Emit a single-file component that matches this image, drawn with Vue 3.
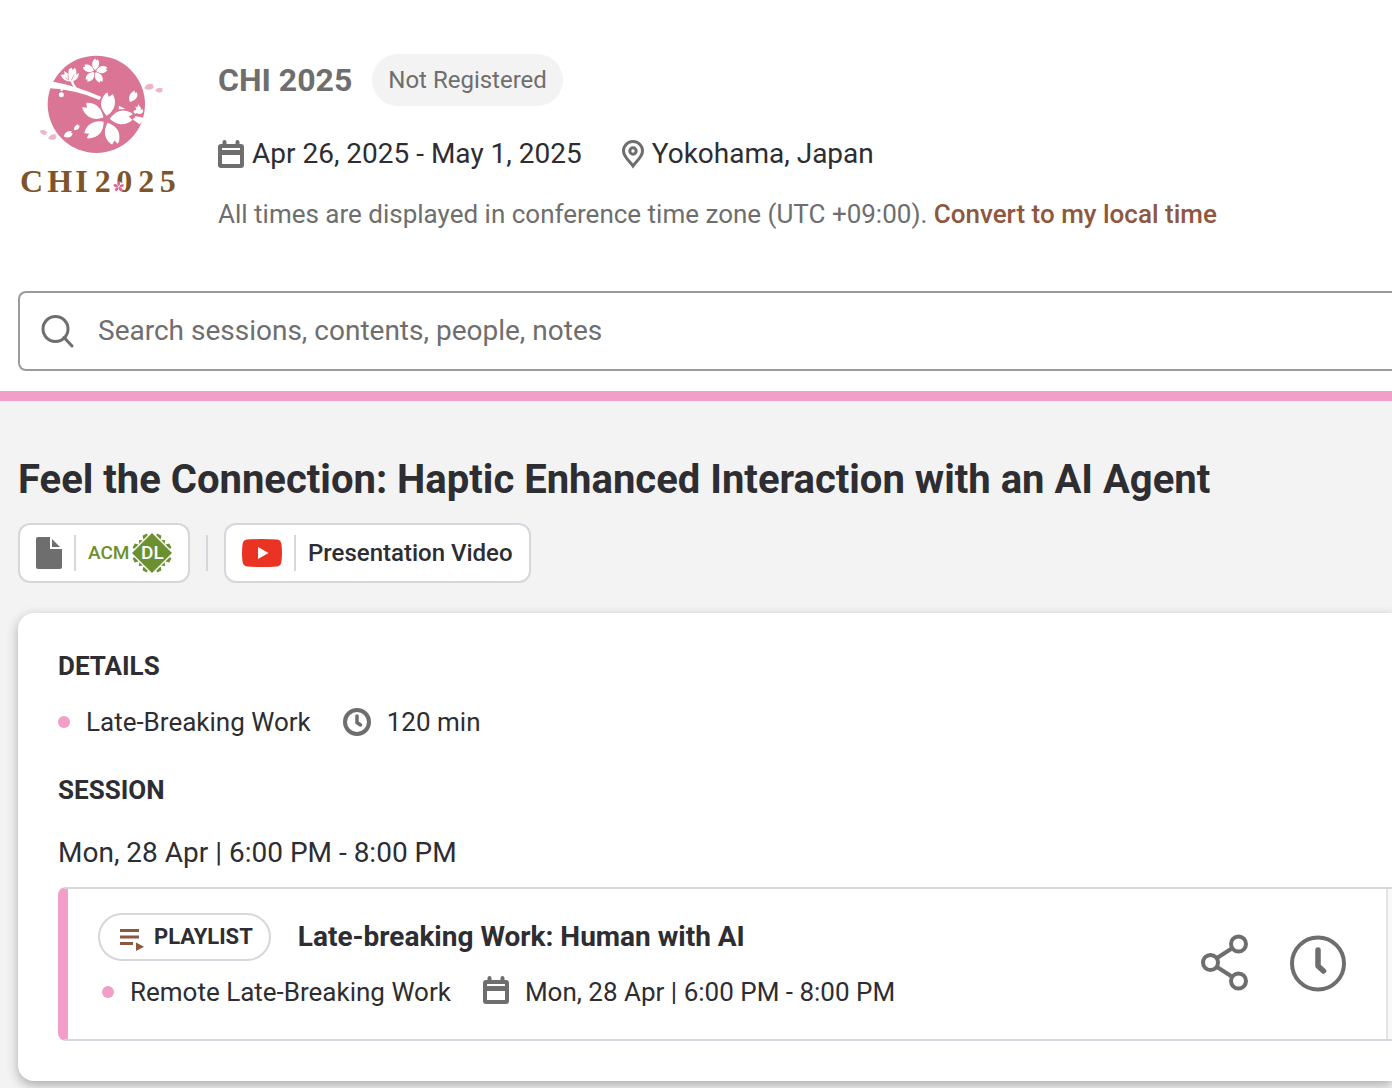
<script setup>
import { ref } from 'vue'

const query = ref('')

const petals = [0, 72, 144, 216, 288]
const openPetals = [5, 82, 158, 229, 300]
const sides = [45, 135, 225, 315]
</script>

<template>
  <div class="page">
    <svg class="defs" aria-hidden="true">
      <symbol id="icon-calendar" viewBox="0 0 26 28">
        <path fill-rule="evenodd" d="M4.500 4V2a2 2 0 0 1 4 0v2h9V2a2 2 0 0 1 4 0v2H23a3 3 0 0 1 3 3v18a3 3 0 0 1-3 3H3a3 3 0 0 1-3-3V7a3 3 0 0 1 3-3zM4 8v2h18V8zM4 15v9h18v-9z" />
      </symbol>
    </svg>

    <header class="header">
      <div class="event">
        <svg class="logo" viewBox="24 30 480 450" role="img" aria-label="CHI 2025">
          <defs>
            <path id="petal" d="M0-8C-21-26-31-50-11-78L-3-84L2-71L13-80C32-54 24-26 0-8Z" />
            <path id="loose-petal" d="M-12 15C-16 0-7-12 8-16L7-9L13-10C17 3 7 14-12 15Z" />
          </defs>
          <circle cx="259" cy="193" r="146" fill="#db7595" />
          <path d="M112 127L134 126Q205 140 274 171L268 180Q200 149 112 144Z" fill="#fff" />
          <path d="M127 126L137 127L122 142H108Z" fill="#fff" />
          <path d="M181 121Q184 135 195 145L201 144Q190 133 189 120ZM152 144H158V153H152Z" fill="#fff" />
          <path d="M152 105L164 103L162 93L176 102Q172 86 185 83L188 90L195 83Q202 94 199 104L206 98Q208 117 188 124Q162 128 152 105Z" fill="#fff" />
          <path d="M176 121L174 103M184 121L193 103M166 113L174 119" stroke="#db7595" stroke-width="2" />
          <circle cx="154" cy="164" r="7.500" fill="#fff" />
          <g transform="translate(255 94) rotate(4)" fill="#fff">
            <use v-for="angle in petals" :key="angle" href="#petal" :transform="`rotate(${angle}) scale(.46)`" />
          </g>
          <g transform="translate(289 238)" fill="#fff" stroke="#db7595" stroke-width="4">
            <use v-for="angle in openPetals" :key="angle" href="#petal" :transform="`rotate(${angle})`" />
          </g>
          <path d="M327 197L346 207L326 208ZM374 228Q390 230 406 235L389 253L367 238L376 232Z" fill="#fff" />
          <path d="M379 211L376 199L382 202L385 193L391 202Q397 207 388 212L398 207Q402 216 394 221Q385 224 381 219Q374 224 370 216Q373 207 379 211Z" fill="#fff" />
          <use href="#loose-petal" transform="translate(369 169) rotate(-10)" fill="#fff" />
          <use href="#loose-petal" transform="translate(175 283) rotate(22) scale(.8)" fill="#fff" />
          <use href="#loose-petal" transform="translate(200 262) scale(.6)" fill="#fff" />
          <g fill="#edb5c8">
            <use href="#loose-petal" transform="translate(418 140) rotate(35) scale(.83)" />
            <use href="#loose-petal" transform="translate(448 150) rotate(45) scale(.65)" />
            <use href="#loose-petal" transform="translate(101 277) rotate(70) scale(.65)" />
            <use href="#loose-petal" transform="translate(128 291) rotate(30) scale(.75)" />
          </g>
          <text class="wordmark" y="455" x="30 112 196 254 319 385 449">CHI2025</text>
          <g transform="translate(326 440)">
            <circle r="15" fill="#fff" />
            <use v-for="angle in petals" :key="angle" href="#petal" fill="#db6595" :transform="`rotate(${angle}) scale(.2)`" />
          </g>
        </svg>

        <div class="info">
          <div class="name-row">
            <h2 class="name">CHI 2025</h2>
            <span class="badge">Not Registered</span>
          </div>
          <div class="meta">
            <span class="meta-item">
              <svg class="calendar" aria-hidden="true"><use href="#icon-calendar" /></svg>
              Apr 26, 2025 - May 1, 2025
            </span>
            <span class="meta-item">
              <svg class="pin" viewBox="0 0 22 28" aria-hidden="true">
                <path d="M11 26C8 21.500 1.500 17 1.500 11A9.500 9.500 0 0 1 20.500 11C20.500 17 14 21.500 11 26Z" fill="none" stroke="currentColor" stroke-width="3" />
                <circle cx="11" cy="11" r="3.200" fill="none" stroke="currentColor" stroke-width="3" />
              </svg>
              Yokohama, Japan
            </span>
          </div>
          <p class="zone">
            All times are displayed in conference time zone (UTC +09:00).
            <a href="#local-time">Convert to my local time</a>
          </p>
        </div>
      </div>

      <label class="search">
        <svg viewBox="0 0 34 34" aria-hidden="true">
          <circle cx="15.500" cy="15" r="12.500" />
          <path d="M24 23.500L32 32" />
        </svg>
        <input v-model="query" type="search" aria-label="Search" placeholder="Search sessions, contents, people, notes" />
      </label>
    </header>

    <main class="main">
      <h1 class="title">Feel the Connection: Haptic Enhanced Interaction with an AI Agent</h1>

      <div class="links">
        <a class="chip" href="#acm-dl" aria-label="ACM Digital Library">
          <svg class="doc" viewBox="0 0 26 32" aria-hidden="true">
            <path d="M2 0H14V12H26V30A2 2 0 0 1 24 32H2A2 2 0 0 1 0 30V2A2 2 0 0 1 2 0ZM16 2L24 10H16Z" />
          </svg>
          <span class="rule"></span>
          <svg class="acm" viewBox="0 0 84 40" aria-hidden="true">
            <g transform="translate(64 20)">
              <path d="M0-20L20 0L0 20L-20 0Z" />
              <path v-for="side in sides" :key="side" d="M-2.500-15.500L0-18.500L2.500-15.500ZM3.500-15.500L5.500-19L10-17.500L9.500-15.500ZM-3.500-15.500L-5.500-19L-10-17.500L-9.500-15.500Z" :transform="`rotate(${side})`" />
            </g>
            <text x="0" y="26">ACM</text>
            <text x="53" y="26" class="dl">DL</text>
          </svg>
        </a>
        <span class="rule"></span>
        <a class="chip" href="#video">
          <svg class="youtube" viewBox="0 0 40 28" aria-hidden="true">
            <path d="M5 .6Q20-.6 35 .6Q38.800 1 39.400 5Q40.600 14 39.400 23Q38.800 27 35 27.400Q20 28.600 5 27.400Q1.200 27 .6 23Q-.6 14 .6 5Q1.200 1 5 .6Z" fill="#ea3323" />
            <path d="M16 8L26.500 14L16 20Z" fill="#fff" />
          </svg>
          <span class="rule"></span>
          Presentation Video
        </a>
      </div>

      <section class="card">
        <h3 class="heading">Details</h3>
        <div class="facts">
          <span class="dot"></span>
          <span class="track">Late-Breaking Work</span>
          <svg class="clock" viewBox="0 0 28 28" aria-hidden="true">
            <circle cx="14" cy="14" r="12" stroke-width="4" />
            <path d="M14 8V14.500L17.500 17" stroke-width="3.500" />
          </svg>
          <span>120 min</span>
        </div>

        <h3 class="heading session-heading">Session</h3>
        <p class="when">Mon, 28 Apr | 6:00 PM - 8:00 PM</p>

        <article class="session">
          <div class="session-body">
            <div class="session-top">
              <span class="playlist">
                <svg viewBox="0 0 24 26" aria-hidden="true">
                  <path d="M0 5H19V8H0ZM0 11.500H19V14.500H0ZM0 18H13V21H0ZM16 18.500L24 22.750L16 27Z" />
                </svg>
                Playlist
              </span>
              <a class="session-name" href="#session">Late-breaking Work: Human with AI</a>
            </div>
            <div class="facts session-facts">
              <span class="dot"></span>
              <span class="track">Remote Late-Breaking Work</span>
              <svg class="calendar" aria-hidden="true"><use href="#icon-calendar" /></svg>
              <span>Mon, 28 Apr | 6:00 PM - 8:00 PM</span>
            </div>
          </div>
          <div class="actions">
            <button type="button" aria-label="Share">
              <svg class="share" viewBox="0 0 48 56" aria-hidden="true">
                <path d="M17 22L31 13M17 31L31 40" />
                <circle cx="10.500" cy="26.500" r="7.500" />
                <circle cx="38.500" cy="8" r="7.500" />
                <circle cx="38.500" cy="45" r="7.500" />
              </svg>
            </button>
            <button type="button" aria-label="Show time">
              <svg class="time" viewBox="0 0 56 56" aria-hidden="true">
                <circle cx="28" cy="27.500" r="26" />
                <path d="M28 14V30L33.500 35" stroke-width="5.500" />
              </svg>
            </button>
          </div>
          <div class="side"></div>
        </article>
      </section>
    </main>
  </div>
</template>

<style>
body {
  margin: 0;
  background: #f3f3f3;
}
</style>

<style scoped>
.page {
  font-family: Roboto, "Liberation Sans", sans-serif;
  font-size: 26px;
  line-height: 32px;
  color: #2d2d32;
  overflow: hidden;
}
h1, h2, h3, p {
  margin: 0;
}
svg {
  display: block;
  flex: none;
  overflow: visible;
}
.defs {
  display: none;
}
.header {
  background: #fff;
  padding: 50px 0 20px 18px;
  border-bottom: 10px solid #f19fc8;
}
.event {
  display: flex;
  gap: 40px;
}
.logo {
  width: 160px;
  height: 150px;
}
.wordmark {
  font: bold 96px "Liberation Serif", serif;
  fill: #7e552b;
}
.info {
  padding-top: 4px;
}
.name-row {
  display: flex;
  align-items: center;
  gap: 20px;
}
.name {
  font-size: 32px;
  color: #6e6e6e;
}
.badge {
  padding: 0 16px;
  border-radius: 26px;
  background: #f3f3f3;
  color: #6e6e6e;
  font-size: 24px;
  line-height: 52px;
}
.meta {
  display: flex;
  gap: 40px;
  margin-top: 30px;
  font-size: 28px;
  line-height: 36px;
}
.meta-item {
  display: flex;
  align-items: center;
  gap: 8px;
}
.calendar {
  width: 26px;
  height: 28px;
  fill: #6e6e6e;
}
.pin {
  width: 22px;
  height: 28px;
  color: #6e6e6e;
}
.zone {
  margin-top: 26px;
  color: #6e6e6e;
}
.zone a {
  color: #8e5740;
  font-weight: 500;
  text-decoration: none;
}
.search {
  display: flex;
  align-items: center;
  gap: 24px;
  box-sizing: border-box;
  height: 80px;
  margin-top: 61px;
  padding-left: 20px;
  border: 2px solid #9b9b9b;
  border-right: 0;
  border-radius: 8px 0 0 8px;
}
.search svg {
  width: 34px;
  height: 34px;
  fill: none;
  stroke: #6e6e6e;
  stroke-width: 3;
  stroke-linecap: round;
}
.search input {
  flex: 1;
  min-width: 0;
  padding: 0;
  border: 0;
  outline: 0;
  background: none;
  color: #2d2d32;
  font: inherit;
  font-size: 28px;
}
.search input::placeholder {
  color: #6e6e6e;
  opacity: 1;
}
.main {
  padding: 55px 0 40px 18px;
}
.title {
  font-size: 40px;
  line-height: 48px;
}
.links {
  display: flex;
  align-items: center;
  gap: 16px;
  margin-top: 19px;
}
.chip {
  display: flex;
  align-items: center;
  gap: 12px;
  box-sizing: border-box;
  height: 60px;
  padding: 0 16px;
  border: 2px solid #d6d6dd;
  border-radius: 12px;
  background: #fff;
  color: #2d2d32;
  font-size: 24px;
  font-weight: 500;
  text-decoration: none;
}
.rule {
  width: 2px;
  height: 36px;
  background: #d6d6dd;
}
.doc {
  width: 26px;
  height: 32px;
  fill: #6e6e6e;
}
.acm {
  width: 84px;
  height: 40px;
  fill: #6c9030;
}
.acm text {
  font-size: 19px;
  font-weight: 500;
}
.acm .dl {
  fill: #fff;
}
.youtube {
  width: 40px;
  height: 28px;
}
.card {
  margin-top: 30px;
  padding: 37px 0 40px 40px;
  border-radius: 16px 0 0 16px;
  background: #fff;
  box-shadow: 0 4px 12px rgba(0, 0, 0, 0.3);
}
.heading {
  font-size: 26px;
  font-weight: 700;
  text-transform: uppercase;
}
.facts {
  display: flex;
  align-items: center;
  gap: 16px;
  margin-top: 24px;
}
.dot {
  width: 12px;
  height: 12px;
  border-radius: 50%;
  background: #f19fc8;
}
.track {
  margin-right: 16px;
}
.clock {
  width: 28px;
  height: 28px;
  fill: none;
  stroke: #6e6e6e;
  stroke-linecap: round;
}
.session-heading {
  margin-top: 36px;
}
.when {
  margin-top: 31px;
  font-size: 28px;
}
.session {
  display: flex;
  margin-top: 18px;
  border: 2px solid #d6d6dd;
  border-width: 2px 0;
  border-left: 10px solid #f19fc8;
  border-radius: 8px 0 0 8px;
}
.session-body {
  flex: 1;
  padding: 24px 0 31px 30px;
}
.session-top {
  display: flex;
  align-items: center;
  gap: 27px;
}
.playlist {
  display: flex;
  align-items: center;
  gap: 10px;
  box-sizing: border-box;
  height: 48px;
  padding: 0 16px 0 20px;
  border: 2px solid #d6d6dd;
  border-radius: 24px;
  font-size: 22px;
  font-weight: 700;
  text-transform: uppercase;
}
.playlist svg {
  width: 24px;
  height: 26px;
  fill: #8e5740;
}
.session-name {
  color: #2d2d32;
  font-size: 28px;
  font-weight: 700;
  text-decoration: none;
}
.session-facts {
  margin-top: 15px;
  padding-left: 4px;
}
.session-facts .calendar {
  margin-bottom: 4px;
}
.actions {
  display: flex;
  align-items: center;
  gap: 42px;
  padding-right: 40px;
}
.actions button {
  padding: 0;
  border: 0;
  background: none;
}
.actions svg {
  fill: none;
  stroke: #6e6e6e;
  stroke-width: 4;
}
.share {
  width: 48px;
  height: 56px;
}
.time {
  width: 56px;
  height: 56px;
  stroke-linecap: round;
  stroke-linejoin: round;
}
.side {
  width: 4px;
  border-left: 2px solid #e3e3e8;
  background: #f9f9f9;
}
</style>
